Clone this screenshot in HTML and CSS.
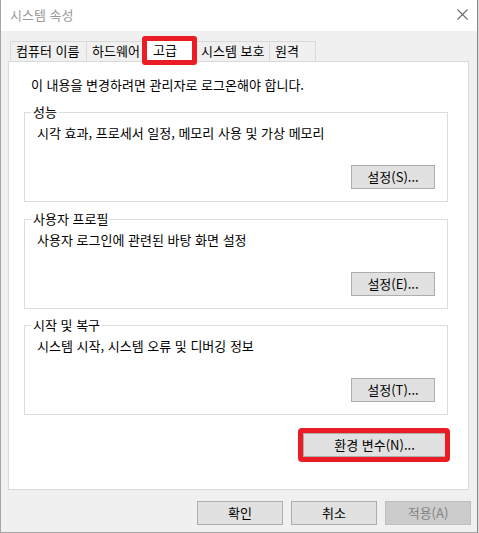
FILE: index.html
```html
<!DOCTYPE html>
<html lang="ko">
<head>
<meta charset="utf-8">
<title>시스템 속성</title>
<link rel="stylesheet" href="styles.css">
</head>
<body>
<div class="window">
  <div class="titlebar">
    <span class="title">시스템 속성</span>
    <svg class="close" width="11" height="11" viewBox="0 0 11 11"><path d="M0.5 0.5 L10.5 10.5 M10.5 0.5 L0.5 10.5" stroke="#6b6b6b" stroke-width="1.1" fill="none"/></svg>
  </div>
  <div class="body">
    <div class="tabs">
      <div class="tab t1">컴퓨터 이름</div>
      <div class="tab t2">하드웨어</div>
      <div class="tab t3 selected">고급</div>
      <div class="tab t4">시스템 보호</div>
      <div class="tab t5">원격</div>
    </div>
    <div class="panel">
      <p class="note">이 내용을 변경하려면 관리자로 로그온해야 합니다.</p>
      <div class="group g1">
        <span class="legend">성능</span>
        <p class="desc">시각 효과, 프로세서 일정, 메모리 사용 및 가상 메모리</p>
        <button class="btn set">설정(S)...</button>
      </div>
      <div class="group g2">
        <span class="legend">사용자 프로필</span>
        <p class="desc">사용자 로그인에 관련된 바탕 화면 설정</p>
        <button class="btn set">설정(E)...</button>
      </div>
      <div class="group g3">
        <span class="legend">시작 및 복구</span>
        <p class="desc">시스템 시작, 시스템 오류 및 디버깅 정보</p>
        <button class="btn set">설정(T)...</button>
      </div>
      <div class="env-row">
        <button class="btn env">환경 변수(N)...</button>
      </div>
    </div>
    <div class="footer">
      <button class="btn foot">확인</button>
      <button class="btn foot">취소</button>
      <button class="btn foot disabled">적용(A)</button>
    </div>
  </div>
</div>
</body>
</html>
```

FILE: styles.css
```css
html, body {
  margin: 0;
  padding: 0;
}
body {
  background: #d8d8d8;
  font-family: "Noto Sans CJK KR", "Noto Sans", sans-serif;
  font-size: 13px;
  line-height: 16px;
  color: #000;
}
.window {
  width: 478px;
  height: 533px;
  box-sizing: border-box;
  border-left: 1px solid #a5a5a5;
  border-right: 1px solid #8a8a8a;
  border-bottom: 1px solid #a5a5a5;
  background: #f0f0f0;
  display: flex;
  flex-direction: column;
}
.titlebar {
  height: 31px;
  background: #fff;
  display: flex;
  align-items: center;
  padding-left: 9px;
  padding-right: 8px;
  flex: none;
}
.title {
  color: #9a9a9a;
  flex: 1;
  margin-top: -1px;
}
.close {
  margin-top: -2px;
  margin-right: 1px;
}
.body {
  flex: 1;
  display: flex;
  flex-direction: column;
}
.tabs {
  display: flex;
  align-items: flex-end;
  height: 20px;
  margin: 10px 0 0 9px;
  position: relative;
  z-index: 2;
}
.tab {
  box-sizing: border-box;
  height: 20px;
  border: 1px solid #d9d9d9;
  border-bottom: none;
  background: #f0f0f0;
  margin-left: -1px;
  padding-left: 5px;
  line-height: 18px;
  white-space: nowrap;
}
.t1 { width: 77px; margin-left: 0; }
.t2 { width: 58px; }
.t3 { width: 53px; }
.t4 { width: 75px; }
.t5 { width: 47px; }
.tab.selected {
  background: #fff;
  height: 23px;
  margin-bottom: -1px;
  padding-top: 1px;
  padding-left: 9px;
  position: relative;
}
.tab.selected::after {
  content: "";
  position: absolute;
  left: -2px;
  top: -4px;
  right: -2px;
  bottom: -3px;
  border: 5px solid #ec1c24;
  border-radius: 3px;
}
.panel {
  box-sizing: border-box;
  width: 461px;
  height: 429px;
  margin-left: 7px;
  background: #fff;
  border: 1px solid #d9d9d9;
  display: flex;
  flex-direction: column;
  position: relative;
  z-index: 1;
}
.note {
  margin: 15px 0 0 22px;
}
.group {
  box-sizing: border-box;
  width: 424px;
  height: 90px;
  margin: 17px 0 0 15px;
  border: 1px solid #dcdcdc;
  padding: 0 12px 12px 12px;
  display: flex;
  flex-direction: column;
}
.g1 { margin-top: 19px; }
.g3 { margin-top: 16px; }
.legend {
  align-self: flex-start;
  background: #fff;
  padding: 0 2px;
  margin: -9px 0 0 -6px;
  height: 16px;
}
.desc {
  margin: 5px 0 0 0;
}
.btn {
  font-family: "Noto Sans CJK KR", "Noto Sans", sans-serif;
  font-size: 13px;
  line-height: 16px;
  color: #000;
  background: #e1e1e1;
  border: 1px solid #adadad;
  box-sizing: border-box;
  height: 24px;
  padding: 0;
  margin: 0;
}
.set {
  width: 84px;
  align-self: flex-end;
  margin-top: auto;
}
.env-row {
  display: flex;
  justify-content: flex-end;
  margin-top: 18px;
  padding-right: 22px;
}
.env {
  width: 143px;
  position: relative;
}
.env::after {
  content: "";
  position: absolute;
  left: -6px;
  top: -6px;
  right: -5px;
  bottom: -6px;
  border: 5px solid #ec1c24;
  border-radius: 4px;
}
.footer {
  display: flex;
  justify-content: flex-end;
  gap: 8px;
  margin-top: 11px;
  padding-right: 6px;
}
.foot {
  width: 86px;
}
.foot.disabled {
  background: #cccccc;
  border-color: #bfbfbf;
  color: #838383;
}
```
